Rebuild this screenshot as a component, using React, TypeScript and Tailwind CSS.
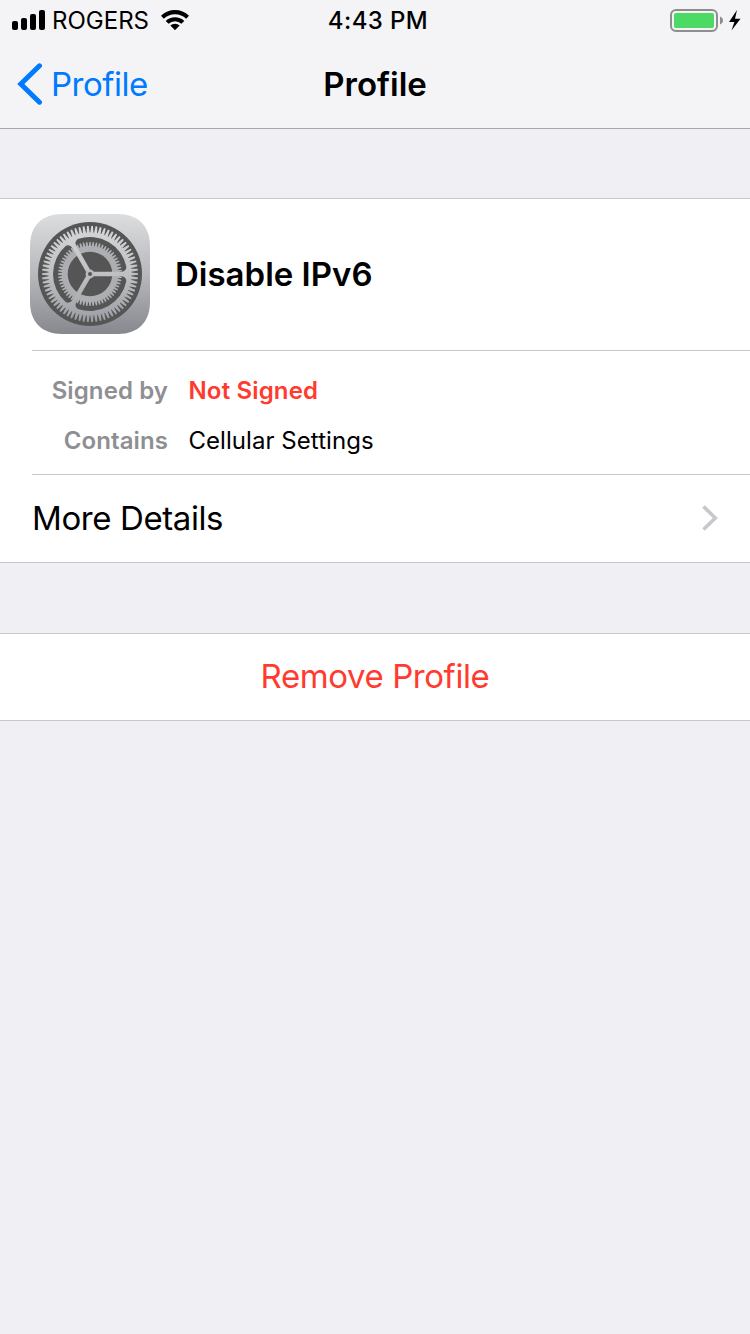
import React from "react";

const C = 60;

function pt(r: number, a: number) {
  return `${(C + r * Math.cos(a)).toFixed(2)},${(C + r * Math.sin(a)).toFixed(2)}`;
}

function gearPoints(count: number, root: number, tip: number) {
  const step = (Math.PI * 2) / count;
  const out: string[] = [];
  for (let i = 0; i < count; i++) {
    const a = i * step;
    out.push(pt(root, a - step * 0.42), pt(tip, a - step * 0.2), pt(tip, a + step * 0.2), pt(root, a + step * 0.42));
  }
  return out.join(" ");
}

// Opening between two spokes: a 120 degree sector with rounded outer corners.
function windowPath(start: number, R: number, h: number, r: number) {
  const end = start + (Math.PI * 2) / 3;
  const d = Math.sqrt((R - r) ** 2 - (h + r) ** 2);
  const s = Math.asin((h + r) / (R - r));
  const at = (along: number, off: number, base: number, side: number) => {
    const x = C + along * Math.cos(base) - side * off * Math.sin(base);
    const y = C + along * Math.sin(base) + side * off * Math.cos(base);
    return `${x.toFixed(2)},${y.toFixed(2)}`;
  };
  const inner = h / Math.tan(Math.PI / 3);
  return `M${at(inner, h, start, 1)} L${at(d, h, start, 1)} A${r},${r} 0 0 1 ${pt(R, start + s)} A${R},${R} 0 0 1 ${pt(R, end - s)} A${r},${r} 0 0 1 ${at(d, h, end, -1)} Z`;
}

const spokes = [0, (Math.PI * 2) / 3, (Math.PI * 4) / 3];

function SettingsIcon() {
  return (
    <svg width="120" height="120" viewBox="0 0 120 120" className="shrink-0">
      <defs>
        <linearGradient id="tile" x1="0" y1="0" x2="0" y2="1">
          <stop offset="0" stopColor="#dcddde" />
          <stop offset="0.5" stopColor="#b8b9bd" />
          <stop offset="1" stopColor="#86888e" />
        </linearGradient>
        <linearGradient id="wheel" gradientUnits="userSpaceOnUse" x1="0" y1="10" x2="0" y2="110">
          <stop offset="0" stopColor="#d6d7d9" />
          <stop offset="0.5" stopColor="#bfc0c3" />
          <stop offset="1" stopColor="#9c9da3" />
        </linearGradient>
        <mask id="windows">
          <rect width="120" height="120" fill="white" />
          {spokes.map((a) => (
            <path key={a} d={windowPath(a, 37, 2.3, 4.5)} fill="black" />
          ))}
        </mask>
      </defs>
      <path d="M32 0H88C108 0 120 12 120 32V88C120 108 108 120 88 120H32C12 120 0 108 0 88V32C0 12 12 0 32 0Z" fill="url(#tile)" />
      <circle cx={C} cy={C} r="52" fill="#555555" />
      <polygon points={gearPoints(60, 28, 32)} fill="#adaeb1" />
      <circle cx={C} cy={C} r="22.3" fill="#555555" />
      <g mask="url(#windows)">
        <polygon points={gearPoints(70, 41.5, 48)} fill="url(#wheel)" />
      </g>
      <circle cx={C} cy={C} r="4.4" fill="#b9babe" />
      <circle cx={C} cy={C} r="2" fill="#555555" />
    </svg>
  );
}

function StatusBar() {
  return (
    <div className="flex h-10 items-center text-2xl leading-none text-black">
      <div className="flex flex-1 items-center pl-3">
        <svg width="34" height="20" viewBox="0 0 34 20">
          <rect x="0" y="11" width="6" height="9" rx="2" />
          <rect x="9" y="8" width="6" height="12" rx="2" />
          <rect x="18" y="4" width="6" height="16" rx="2" />
          <rect x="27" y="0" width="6" height="20" rx="2" />
        </svg>
        <span className="ml-1.5 pt-0.5">ROGERS</span>
        <svg width="28" height="20" viewBox="0 0 28 20" className="ml-3">
          <path d="M0 5.8A20 20 0 0 1 28 5.8L25.2 8.8A16 16 0 0 0 2.8 8.8Z" />
          <path d="M4.7 10.9A13.4 13.4 0 0 1 23.3 10.9L20.4 13.8A9.2 9.2 0 0 0 7.6 13.8Z" />
          <path d="M9.3 15.6A6.8 6.8 0 0 1 18.7 15.6L14 20.2Z" />
        </svg>
      </div>
      <span className="pt-0.5 pl-0.5 font-medium tracking-[0.4px]">4:43 PM</span>
      <div className="flex flex-1 items-center justify-end pt-px pr-2">
        <svg width="72" height="24" viewBox="0 0 72 24">
          <rect x="1" y="1" width="46" height="21" rx="5" fill="none" stroke="#8e8e90" strokeWidth="2" />
          <rect x="4" y="4" width="40" height="15" rx="2" fill="#4cd964" />
          <path d="M50 7.5C54 9 54 14 50 15.5Z" fill="#8e8e90" />
          <path d="M67 1L59 13H64.4L61.5 21.5L70.5 9.7H65Z" fill="#000" />
        </svg>
      </div>
    </div>
  );
}

export default function App() {
  return (
    <div className="min-h-[1334px] w-[750px] bg-[#efeff4] font-['Inter','Liberation_Sans',sans-serif] text-black">
      <header className="h-[129px] border-b border-[#a7a7ac] bg-[#f4f4f6]">
        <StatusBar />
        <nav className="flex h-[88px] items-center text-[33px] leading-none">
          <a className="flex flex-1 items-center pl-[17px] text-[#007aff]">
            <svg width="26" height="42" viewBox="0 0 26 42" fill="none" stroke="currentColor" strokeWidth="5">
              <path d="M22.5 2.8L3.8 21L22.5 39.2" strokeLinecap="round" />
            </svg>
            <span className="ml-2 pt-px tracking-[-0.5px]">Profile</span>
          </a>
          <h1 className="pt-px font-semibold">Profile</h1>
          <div className="flex-1 pr-[17px]" />
        </nav>
      </header>
      <main className="pt-[69px]">
        <section className="border-y border-[#c8c7cc] bg-white pl-8">
          <div className="-ml-0.5 flex h-[151px] items-center pb-0.5">
            <SettingsIcon />
            <h2 className="ml-[25px] pt-px text-[33px] leading-none font-semibold">Disable IPv6</h2>
          </div>
          <dl className="grid h-[125px] grid-cols-[136px_1fr] content-end gap-x-[20.5px] border-y border-[#c8c7cc] pb-[8px] text-2xl leading-[50px]">
            <dt className="text-right font-semibold tracking-[0.1px] text-[#8e8e93]">Signed by</dt>
            <dd className="font-semibold tracking-[0.15px] text-[#ff3b30]">Not Signed</dd>
            <dt className="text-right font-semibold tracking-[0.1px] text-[#8e8e93]">Contains</dt>
            <dd className="tracking-[0.05px]">Cellular Settings</dd>
          </dl>
          <div className="flex h-[87px] items-center justify-between pr-8 pb-px text-[33px] leading-none">
            <span className="tracking-[-0.4px]">More Details</span>
            <svg width="16" height="26" viewBox="0 0 16 26" fill="none" stroke="#c7c7cc" strokeWidth="3.6">
              <path d="M1.5 1.5L13.3 13L1.5 24.5" />
            </svg>
          </div>
        </section>
        <button className="mt-[70px] flex h-[88px] w-full items-center justify-center border-y border-[#c8c7cc] bg-white pb-0.5 text-[33px] leading-none tracking-[-0.42px] text-[#ff3b30]">
          Remove Profile
        </button>
      </main>
    </div>
  );
}
